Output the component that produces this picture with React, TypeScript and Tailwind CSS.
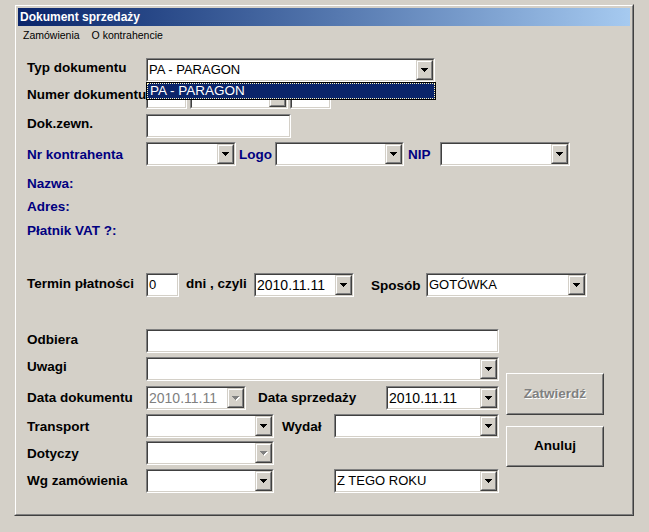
import type { ReactNode } from "react";

function Arrow({ disabled }: { disabled?: boolean }) {
  return (
    <svg width="8" height="5" viewBox="0 0 8 5" shapeRendering="crispEdges">
      {disabled && (
        <path d="M1 1h7v1H1zM2 2h5v1H2zM3 3h3v1H3zM4 4h1v1H4z" fill="#ffffff" />
      )}
      <path
        d="M0 0h7v1H0zM1 1h5v1H1zM2 2h3v1H2zM3 3h1v1H3z"
        fill={disabled ? "#808080" : "#000000"}
      />
    </svg>
  );
}

function DropButton({ disabled }: { disabled?: boolean }) {
  return (
    <div className="h-full w-[17px] shrink-0 border border-t-[#d4d0c8] border-l-[#d4d0c8] border-b-[#404040] border-r-[#404040]">
      <div className="flex h-full items-center justify-center border border-t-white border-l-white border-b-[#808080] border-r-[#808080] bg-[#d4d0c8]">
        <Arrow disabled={disabled} />
      </div>
    </div>
  );
}

// sunken edit box, classic 3D look
function Field({ className = "", children }: { className?: string; children?: ReactNode }) {
  return (
    <div
      className={`h-[24px] shrink-0 border border-t-[#808080] border-l-[#808080] border-b-white border-r-white ${className}`}
    >
      <div className="flex h-full items-center border border-t-[#404040] border-l-[#404040] border-b-[#d4d0c8] border-r-[#d4d0c8] bg-white">
        {children}
      </div>
    </div>
  );
}

function Value({ text, date, disabled }: { text?: string; date?: boolean; disabled?: boolean }) {
  return (
    <span
      className={`flex-1 truncate pl-[1px] leading-[18px] ${date ? "text-[14px]" : "text-[13px]"} ${
        disabled ? "text-[#808080]" : "text-black"
      }`}
    >
      {text}
    </span>
  );
}

function Combo({
  className = "",
  value,
  date,
  disabled,
}: {
  className?: string;
  value?: string;
  date?: boolean;
  disabled?: boolean;
}) {
  return (
    <Field className={className}>
      <Value text={value} date={date} disabled={disabled} />
      <DropButton disabled={disabled} />
    </Field>
  );
}

function Label({
  children,
  className = "",
  blue,
}: {
  children: ReactNode;
  className?: string;
  blue?: boolean;
}) {
  return (
    <span
      className={`shrink-0 whitespace-nowrap text-[13.5px] font-bold leading-[15px] ${
        blue ? "text-[#000080]" : "text-black"
      } ${className}`}
    >
      {children}
    </span>
  );
}

function PushButton({
  label,
  disabled,
  className = "",
}: {
  label: string;
  disabled?: boolean;
  className?: string;
}) {
  return (
    <div
      className={`w-[98px] border border-t-white border-l-white border-b-[#404040] border-r-[#404040] ${className}`}
    >
      <div
        className={`flex h-full items-center justify-center border border-t-[#d4d0c8] border-l-[#d4d0c8] border-b-[#808080] border-r-[#808080] text-[13.5px] font-bold ${
          disabled ? "text-[#808080] [text-shadow:1px_1px_0_#ffffff]" : "text-black"
        }`}
      >
        {label}
      </div>
    </div>
  );
}

export default function App() {
  return (
    <div className="h-[532px] w-[649px] bg-[#d4d0c8] pl-[14px] pt-[4px] font-['Liberation_Sans',Arial,sans-serif]">
      {/* window frame */}
      <div className="h-[512px] w-[620px] border border-t-[#d4d0c8] border-l-[#d4d0c8] border-b-[#404040] border-r-[#404040]">
        <div className="flex h-full flex-col border border-t-white border-l-white border-b-[#808080] border-r-[#808080] p-[2px]">
          <div className="h-[18px] bg-linear-to-r from-[#0a246a] to-[#a6caf0] pl-[2px] text-[12px] font-bold leading-[18px] text-white">
            Dokument sprzedaży
          </div>

          <div className="flex h-[18px] items-center text-[10.5px] leading-[18px] text-black">
            <span className="ml-[5px]">Zamówienia</span>
            <span className="ml-[12px]">O kontrahencie</span>
          </div>

          <div className="flex flex-col pl-[9px]">
            {/* Typ dokumentu */}
            <div className="mt-[14px] flex h-[24px] items-center">
              <Label className="mb-[6px] w-[119px]">Typ dokumentu</Label>
              <div className="relative">
                <Combo className="w-[289px]" value="PA - PARAGON" />
                <div className="absolute left-0 top-[24px] z-10 h-[18px] w-[290px] border border-black bg-[#0a246a]">
                  <div className="h-full border border-dotted border-[#fff8c0] pl-[2px] text-[13.5px] leading-[14px] text-white">
                    PA - PARAGON
                  </div>
                </div>
              </div>
            </div>

            {/* Numer dokumentu */}
            <div className="mt-[3px] flex h-[24px] items-center">
              <Label className="mb-[6px] w-[119px]">Numer dokumentu</Label>
              <Field className="w-[41px]" />
              <Combo className="ml-[3px] w-[98px]" />
              <Field className="ml-[2px] w-[41px]" />
            </div>

            {/* Dok.zewn. */}
            <div className="mt-[5px] flex h-[24px] items-center">
              <Label className="mb-[6px] w-[119px]">Dok.zewn.</Label>
              <Field className="w-[145px]" />
            </div>

            {/* Kontrahent */}
            <div className="mt-[4px] flex h-[24px] items-center">
              <Label blue className="w-[119px]">
                Nr kontrahenta
              </Label>
              <Combo className="w-[90px]" />
              <Label blue className="ml-[3px] w-[36px]">
                Logo
              </Label>
              <Combo className="w-[129px]" />
              <Label blue className="ml-[4px] w-[32px]">
                NIP
              </Label>
              <Combo className="w-[130px]" />
            </div>

            <div className="mt-[5px] flex h-[24px] items-center">
              <Label blue>Nazwa:</Label>
            </div>
            <div className="flex h-[23px] items-center">
              <Label blue>Adres:</Label>
            </div>
            <div className="flex h-[24px] items-center">
              <Label blue>Płatnik VAT ?:</Label>
            </div>

            {/* Termin płatności */}
            <div className="mt-[31px] flex h-[24px] items-center">
              <Label className="mb-[4px] w-[119px]">Termin płatności</Label>
              <Field className="w-[33px]">
                <Value text="0" />
              </Field>
              <Label className="mb-[4px] ml-[7px] w-[68px]">dni , czyli</Label>
              <Combo className="w-[100px]" value="2010.11.11" date />
              <Label className="ml-[17px] w-[55px]">Sposób</Label>
              <Combo className="w-[161px]" value="GOTÓWKA" />
            </div>

            {/* lower part with buttons */}
            <div className="mt-[32px] flex">
              <div className="flex w-[472px] flex-col">
                <div className="flex h-[24px] items-center">
                  <Label className="mb-[4px] w-[119px]">Odbiera</Label>
                  <Field className="w-[353px]" />
                </div>
                <div className="mt-[4px] flex h-[24px] items-center">
                  <Label className="mb-[5px] w-[119px]">Uwagi</Label>
                  <Combo className="w-[353px]" />
                </div>
                <div className="mt-[5px] flex h-[24px] items-center">
                  <Label className="mb-[2px] w-[119px]">Data dokumentu</Label>
                  <Combo className="w-[100px]" value="2010.11.11" date disabled />
                  <Label className="mb-[2px] ml-[12px] w-[128px]">Data sprzedaży</Label>
                  <Combo className="w-[113px]" value="2010.11.11" date />
                </div>
                <div className="mt-[4px] flex h-[24px] items-center">
                  <Label className="w-[119px]">Transport</Label>
                  <Combo className="w-[128px]" />
                  <Label className="ml-[8px] w-[52px]">Wydał</Label>
                  <Combo className="w-[165px]" />
                </div>
                <div className="mt-[3px] flex h-[24px] items-center">
                  <Label className="w-[119px]">Dotyczy</Label>
                  <Combo className="w-[128px]" disabled />
                </div>
                <div className="mt-[4px] flex h-[24px] items-center">
                  <Label className="mb-[2px] w-[119px]">Wg zamówienia</Label>
                  <Combo className="w-[128px]" />
                  <Combo className="ml-[60px] w-[165px]" value="Z TEGO ROKU" />
                </div>
              </div>

              <div className="ml-[7px] flex flex-col">
                <PushButton label="Zatwierdź" disabled className="mt-[44px] h-[42px]" />
                <PushButton label="Anuluj" className="mt-[11px] h-[41px]" />
              </div>
            </div>
          </div>
        </div>
      </div>
    </div>
  );
}
